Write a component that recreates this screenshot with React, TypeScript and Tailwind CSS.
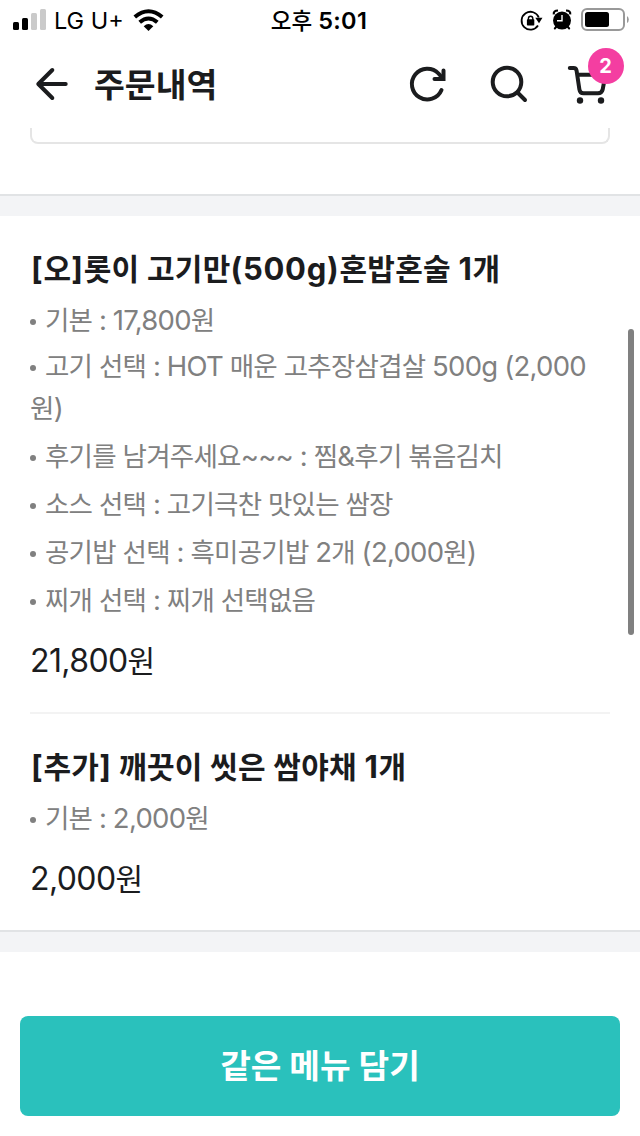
function StatusBar() {
  return (
    <div className="flex h-10 w-full items-center text-black">
      <div className="flex flex-1 items-center pl-[13px]">
        <svg width="34" height="40" viewBox="13 0 34 40">
          <rect x="13" y="22" width="6" height="8" rx="1.5" />
          <rect x="22" y="18" width="6" height="12" rx="1.5" />
          <rect x="31" y="13" width="6" height="17" rx="1.5" fill="#cacaca" />
          <rect x="40" y="9" width="6" height="21" rx="1.5" fill="#cacaca" />
        </svg>
        <span className="ml-[7px] mt-0.5 w-[74px] whitespace-nowrap text-[23.5px] leading-10">LG U+</span>
        <svg className="ml-[4px]" width="34" height="40" viewBox="132 0 34 40" fill="none" stroke="#000">
          <path d="M134.800 17Q148.500 5.500 162.200 17" strokeWidth="4" />
          <path d="M139.700 22.300Q148.500 14.800 157.300 22.300" strokeWidth="4" />
          <path d="M143.700 26.300Q148.500 21.500 153.300 26.300L148.500 31Z" fill="#000" stroke="none" />
        </svg>
      </div>
      <span className="mr-[5px] mt-0.5 whitespace-nowrap text-[22.500px] font-medium leading-10">
        오후 <span className="text-[23.500px] font-semibold tracking-[0.3px]">5:01</span>
      </span>
      <div className="flex flex-1 justify-end pr-[10px]">
        <svg width="110" height="40" viewBox="520 0 110 40">
          <path d="M538 25.500A8.900 8.900 0 1 1 538.800 17.500" fill="none" stroke="#000" strokeWidth="1.800" />
          <path d="M535.300 17.800H542.500L539 23.300Z" />
          <rect x="526.900" y="19.300" width="7.400" height="6.200" rx="0.800" />
          <path d="M528.400 20V18.500a2.200 2.200 0 0 1 4.400 0V20" fill="none" stroke="#000" strokeWidth="1.400" />
          <circle cx="562" cy="20.600" r="9" />
          <path d="M553.800 14.300Q553.300 10.600 558 10.500M570.200 14.300Q570.700 10.600 566 10.500" fill="none" stroke="#000" strokeWidth="2.200" />
          <path d="M556.500 26.500L554.800 28.500M567.500 26.500L569.200 28.500" stroke="#000" strokeWidth="2" strokeLinecap="round" />
          <path d="M562 15V20.800H557" fill="none" stroke="#fff" strokeWidth="1.400" />
          <rect x="582" y="9" width="42" height="21" rx="5" fill="none" stroke="#999" strokeWidth="2" />
          <rect x="585" y="12" width="24" height="15" rx="2.500" />
          <path d="M627 16Q628.800 17 628.800 19.500T627 23Z" fill="#999" />
        </svg>
      </div>
    </div>
  );
}

function Header() {
  return (
    <header className="flex h-[88px] items-center text-[#1b1c1e]">
      <svg className="ml-[33px]" width="38" height="88" viewBox="33 40 38 88" fill="none" stroke="currentColor" strokeWidth="4" strokeLinecap="round" strokeLinejoin="round">
        <path d="M65.700 84H38.500M52.300 70L38.300 84L52.300 98" />
      </svg>
      <h1 className="ml-[23px] mt-0.5 flex-1 whitespace-nowrap text-[33.500px] font-bold leading-[86px]">주문내역</h1>
      <div className="relative">
        <svg width="240" height="88" viewBox="400 40 240 88" fill="none" stroke="currentColor" strokeWidth="4" strokeLinecap="round" strokeLinejoin="round">
          <path d="M441.500 90A15.400 15.400 0 1 1 438.500 73.500L442 77.500" />
          <path d="M443.500 70.500V79H434.500" strokeLinejoin="miter" />
          <path d="M437.500 79L443.500 73V79Z" fill="currentColor" stroke="none" />
          <circle cx="507" cy="82" r="14.300" />
          <path d="M517.500 92.500L525 100" />
          <path d="M569.800 68H573.500Q576.200 68 576.600 70.700L579.400 89.500Q580 93.300 583.500 93.300H598Q601.700 93.300 602.600 89.800L605.500 74.700H577.500" />
          <circle cx="580" cy="100.500" r="3.200" fill="currentColor" stroke="none" />
          <circle cx="601" cy="100.500" r="3.200" fill="currentColor" stroke="none" />
        </svg>
        <span className="absolute right-4 top-2 size-9 rounded-full bg-[#f43ea1] pr-px text-center text-[20px] font-bold leading-9 text-white">2</span>
      </div>
    </header>
  );
}

/** Sets Latin letters, digits and punctuation slightly larger than the Hangul around them. */
function Mixed({ text, latin }: { text: string; latin: string }) {
  return text.split(/([\x21-\x7e]+)/).map((run, i) =>
    i % 2 ? (
      <span key={i} className={latin}>
        {run}
      </span>
    ) : (
      run
    ),
  );
}

function Option({ children, className = '' }: { children: string; className?: string }) {
  return (
    <li className={`whitespace-pre-line text-[26.500px] leading-[42px] tracking-[-0.76px] text-[#808080] ${className}`}>
      <span className="mr-[9px] inline-block size-[6px] rounded-full bg-[#808080] align-[5px]" />
      <Mixed text={children} latin="text-[27.500px] leading-none tracking-[-0.72px]" />
    </li>
  );
}

function ItemTitle({ children }: { children: string }) {
  return (
    <h2 className="ml-px mt-[33px] h-[39px] whitespace-nowrap text-[30px] font-bold leading-10 tracking-[0.3px]">
      <Mixed text={children} latin="text-[31px] leading-none tracking-[0.7px]" />
    </h2>
  );
}

function Price({ children }: { children: string }) {
  return (
    <p className="mb-8 mt-5 h-[39px] text-[30px] leading-10">
      <Mixed text={children} latin="text-[32px] leading-none tracking-[-0.6px]" />
    </p>
  );
}

function Band() {
  return <div className="h-[22px] border-t-2 border-[#e1e3e5] bg-[#f3f4f6]" />;
}

export default function App() {
  return (
    <div className="relative h-[1136px] w-[640px] overflow-hidden bg-white font-[Inter,'Noto_Sans_CJK_KR',sans-serif] text-[#1b1c1e]">
      <StatusBar />
      <Header />
      <div className="mx-[30px] mb-[50px] h-4 rounded-b-[8px] border-2 border-t-0 border-[#e5e5e5]" />
      <Band />
      <main className="flow-root px-[30px]">
        <section className="flow-root border-b-2 border-[#f3f3f3]">
          <ItemTitle>[오]롯이 고기만(500g)혼밥혼술 1개</ItemTitle>
          <ul className="mt-[11px]">
            <Option>기본 : 17,800원</Option>
            <Option className="mt-1">{'고기 선택 : HOT 매운 고추장삼겹살 500g (2,000\n원)'}</Option>
            <Option className="mt-1.5">후기를 남겨주세요~~~ : 찜&amp;후기 볶음김치</Option>
            <Option className="mt-1.5">소스 선택 : 고기극찬 맛있는 쌈장</Option>
            <Option className="mt-1.5">공기밥 선택 : 흑미공기밥 2개 (2,000원)</Option>
            <Option className="mt-1.5">찌개 선택 : 찌개 선택없음</Option>
          </ul>
          <Price>21,800원</Price>
        </section>
        <section className="flow-root">
          <ItemTitle>[추가] 깨끗이 씻은 쌈야채 1개</ItemTitle>
          <ul className="mt-[11px]">
            <Option>기본 : 2,000원</Option>
          </ul>
          <Price>2,000원</Price>
        </section>
      </main>
      <Band />
      <div className="px-5 pt-16">
        <button className="h-[100px] w-full rounded-[8px] bg-[#2ac1bc] pt-0.5 text-[33.300px] font-bold text-white">같은 메뉴 담기</button>
      </div>
      <div className="absolute left-[628px] top-[329px] h-[306px] w-[6px] rounded-full bg-[#808080]" />
    </div>
  );
}
